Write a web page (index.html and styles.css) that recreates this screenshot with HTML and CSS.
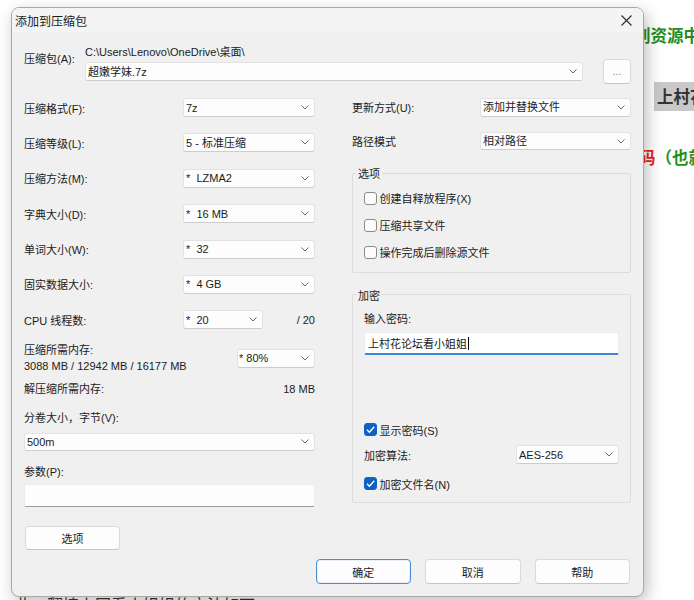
FILE: index.html
```html
<!DOCTYPE html>
<html lang="zh-CN">
<head>
<meta charset="utf-8">
<title>添加到压缩包</title>
<link rel="stylesheet" href="styles.css">
</head>
<body>
<div class="page">
  <div class="bg bg1">到资源中</div>
  <div class="bg bg2">上村花</div>
  <div class="bg bg3"><span class="red">码</span><span class="green">（也就</span></div>
  <div class="bg bg4">此、翻墙上网看小姐姐的方法如下</div>

  <div class="dialog">
    <div class="titlebar">
      <span class="title">添加到压缩包</span>
      <svg class="close" width="11" height="11" viewBox="0 0 11 11"><path d="M0.5 0.5 L10.5 10.5 M10.5 0.5 L0.5 10.5" stroke="#2b2b2b" stroke-width="1.1" fill="none"/></svg>
    </div>
    <div class="content">
      <div class="archive">
        <span class="lbl">压缩包(A):</span>
        <div class="archive-main">
          <div class="path">C:\Users\Lenovo\OneDrive\桌面\</div>
          <div class="combo arch-combo"><span class="val">超嫩学妹.7z</span><svg class="chev" width="8" height="5" viewBox="0 0 8 5"><path d="M0.5 0.5 L4 4 L7.5 0.5" stroke="#6a6a6a" fill="none"/></svg></div>
        </div>
        <div class="btn browse">...</div>
      </div>

      <div class="cols">
        <div class="left">
          <div class="row"><span class="lbl">压缩格式(F):</span><div class="combo"><span class="val">7z</span><svg class="chev" width="8" height="5" viewBox="0 0 8 5"><path d="M0.5 0.5 L4 4 L7.5 0.5" stroke="#6a6a6a" fill="none"/></svg></div></div>
          <div class="row"><span class="lbl">压缩等级(L):</span><div class="combo"><span class="val">5 - 标准压缩</span><svg class="chev" width="8" height="5" viewBox="0 0 8 5"><path d="M0.5 0.5 L4 4 L7.5 0.5" stroke="#6a6a6a" fill="none"/></svg></div></div>
          <div class="row"><span class="lbl">压缩方法(M):</span><div class="combo"><span class="val">*  LZMA2</span><svg class="chev" width="8" height="5" viewBox="0 0 8 5"><path d="M0.5 0.5 L4 4 L7.5 0.5" stroke="#6a6a6a" fill="none"/></svg></div></div>
          <div class="row"><span class="lbl">字典大小(D):</span><div class="combo"><span class="val">*  16 MB</span><svg class="chev" width="8" height="5" viewBox="0 0 8 5"><path d="M0.5 0.5 L4 4 L7.5 0.5" stroke="#6a6a6a" fill="none"/></svg></div></div>
          <div class="row"><span class="lbl">单词大小(W):</span><div class="combo"><span class="val">*  32</span><svg class="chev" width="8" height="5" viewBox="0 0 8 5"><path d="M0.5 0.5 L4 4 L7.5 0.5" stroke="#6a6a6a" fill="none"/></svg></div></div>
          <div class="row"><span class="lbl">固实数据大小:</span><div class="combo"><span class="val">*  4 GB</span><svg class="chev" width="8" height="5" viewBox="0 0 8 5"><path d="M0.5 0.5 L4 4 L7.5 0.5" stroke="#6a6a6a" fill="none"/></svg></div></div>
          <div class="row"><span class="lbl">CPU 线程数:</span><div class="combo cpu"><span class="val">*  20</span><svg class="chev" width="8" height="5" viewBox="0 0 8 5"><path d="M0.5 0.5 L4 4 L7.5 0.5" stroke="#6a6a6a" fill="none"/></svg></div><span class="total">/ 20</span></div>

          <div class="mem">
            <div class="mem-text">
              <div>压缩所需内存:</div>
              <div>3088 MB / 12942 MB / 16177 MB</div>
            </div>
            <div class="combo mem-combo"><span class="val">* 80%</span><svg class="chev" width="8" height="5" viewBox="0 0 8 5"><path d="M0.5 0.5 L4 4 L7.5 0.5" stroke="#6a6a6a" fill="none"/></svg></div>
          </div>
          <div class="decomp"><span>解压缩所需内存:</span><span>18 MB</span></div>
          <div class="plain-lbl vol-lbl">分卷大小，字节(V):</div>
          <div class="combo vol-combo"><span class="val">500m</span><svg class="chev" width="8" height="5" viewBox="0 0 8 5"><path d="M0.5 0.5 L4 4 L7.5 0.5" stroke="#6a6a6a" fill="none"/></svg></div>
          <div class="plain-lbl param-lbl">参数(P):</div>
          <div class="textbox param-box"></div>
          <div class="btn opt-btn">选项</div>
        </div>

        <div class="right">
          <div class="rrow"><span class="lbl">更新方式(U):</span><div class="combo"><span class="val">添加并替换文件</span><svg class="chev" width="8" height="5" viewBox="0 0 8 5"><path d="M0.5 0.5 L4 4 L7.5 0.5" stroke="#6a6a6a" fill="none"/></svg></div></div>
          <div class="rrow"><span class="lbl">路径模式</span><div class="combo"><span class="val">相对路径</span><svg class="chev" width="8" height="5" viewBox="0 0 8 5"><path d="M0.5 0.5 L4 4 L7.5 0.5" stroke="#6a6a6a" fill="none"/></svg></div></div>

          <fieldset class="group opts">
            <legend>选项</legend>
            <div class="cb"><span class="box"></span><span>创建自释放程序(X)</span></div>
            <div class="cb"><span class="box"></span><span>压缩共享文件</span></div>
            <div class="cb"><span class="box"></span><span>操作完成后删除源文件</span></div>
          </fieldset>

          <fieldset class="group enc">
            <legend>加密</legend>
            <div class="pw-lbl">输入密码:</div>
            <div class="pw-box"><span class="pw-text">上村花论坛看小姐姐</span><span class="caret"></span></div>
            <div class="cb show-pw"><span class="box checked"><svg width="13" height="13" viewBox="0 0 13 13"><path d="M3 6.8 L5.4 9.2 L10.2 3.8" stroke="#fff" stroke-width="1.4" fill="none"/></svg></span><span>显示密码(S)</span></div>
            <div class="alg"><span class="lbl">加密算法:</span><div class="combo"><span class="val">AES-256</span><svg class="chev" width="8" height="5" viewBox="0 0 8 5"><path d="M0.5 0.5 L4 4 L7.5 0.5" stroke="#6a6a6a" fill="none"/></svg></div></div>
            <div class="cb enc-names"><span class="box checked"><svg width="13" height="13" viewBox="0 0 13 13"><path d="M3 6.8 L5.4 9.2 L10.2 3.8" stroke="#fff" stroke-width="1.4" fill="none"/></svg></span><span>加密文件名(N)</span></div>
          </fieldset>
        </div>
      </div>

      <div class="buttons">
        <div class="btn default">确定</div>
        <div class="btn">取消</div>
        <div class="btn">帮助</div>
      </div>
    </div>
  </div>
</div>
</body>
</html>
```

FILE: styles.css
```css
* { box-sizing: border-box; }
html, body { margin: 0; padding: 0; }
body {
  width: 694px;
  height: 600px;
  overflow: hidden;
  background: #ffffff;
  font-family: "Liberation Sans", "Noto Sans CJK SC", sans-serif;
  font-size: 11px;
  color: #1b1b1b;
}
.page { position: relative; width: 694px; height: 600px; overflow: hidden; }

/* background page fragments behind the window */
.bg {
  position: absolute;
  font-family: "Noto Sans CJK SC", sans-serif;
  font-weight: bold;
  font-size: 16.5px;
  line-height: 22px;
  white-space: nowrap;
}
.bg1 { left: 634px; top: 24px; color: #1f8f1f; }
.bg2 { left: 654px; top: 82px; width: 60px; height: 29px; padding: 3px 0 0 3px; background: #c9c9c9; color: #333; }
.bg3 { left: 639px; top: 146px; }
.red { color: #e52323; }
.green { color: #1f8f1f; }
.bg4 { left: 15px; top: 593px; color: #333; font-weight: normal; font-size: 16px; }

/* window */
.dialog {
  position: absolute;
  left: 11px;
  top: 7px;
  width: 633px;
  height: 590px;
  background: #f0f0f0;
  border: 1px solid #a9a9a9;
  border-radius: 8px;
  box-shadow: 3px 5px 16px rgba(0, 0, 0, 0.26);
  overflow: hidden;
  display: flex;
  flex-direction: column;
}
.titlebar {
  flex: none;
  height: 24px;
  display: flex;
  align-items: center;
  justify-content: space-between;
  padding: 0 11px 0 3px;
  background: #f4f4f5;
  font-family: "Noto Sans CJK SC", sans-serif;
  font-size: 12px;
}
.close { display: block; }
.content {
  flex: 1;
  display: flex;
  flex-direction: column;
  padding: 13px 12px 0 12px;
}

/* common controls */
.combo {
  display: flex;
  align-items: center;
  background: #fdfdfd;
  border: 1px solid #e2e2e2;
  border-bottom-color: #cdcdcd;
  border-radius: 3px;
  padding-left: 2px;
  line-height: 16px;
  white-space: pre;
}
.combo .val { flex: 1; overflow: hidden; }
.chev { flex: none; margin-right: 5px; display: block; }
.btn {
  display: flex;
  align-items: center;
  justify-content: center;
  background: #fdfdfd;
  border: 1px solid #dadada;
  border-bottom-color: #c6c6c6;
  border-radius: 4px;
  font-family: "Noto Sans CJK SC", sans-serif;
}
.box {
  flex: none;
  width: 13px;
  height: 13px;
  border: 1px solid #8b8b8b;
  border-radius: 3px;
  background: #fbfbfb;
}
.box.checked { background: #0f62c2; border-color: #0f62c2; }
.box svg { display: block; margin: -1px; }

/* archive row */
.archive { display: flex; align-items: flex-start; }
.archive .lbl { width: 61px; margin-top: 6px; line-height: 16px; }
.archive-main { flex: 1; }
.path { line-height: 14px; }
.arch-combo { margin-top: 3px; height: 19px; }
.browse { flex: none; width: 28px; height: 25px; margin-left: 20px; margin-top: 14px; color: #888; font-size: 10px; padding-bottom: 3px; }

/* columns */
.cols { display: flex; gap: 37px; margin-top: 14px; }
.left { width: 291px; display: flex; flex-direction: column; }
.right { width: 279px; display: flex; flex-direction: column; }

.row { display: flex; align-items: center; height: 19px; }
.row + .row { margin-top: 16.4px; }
.row .lbl { width: 159px; flex: none; }
.row .combo { flex: 1; height: 19px; }
.row .combo.cpu { flex: none; width: 80px; }
.total { flex: 1; text-align: right; }

.mem { display: flex; margin-top: 12.6px; line-height: 16px; }
.mem-text { flex: 1; }
.mem-combo { flex: none; width: 78px; height: 18.4px; margin-top: 7.3px; padding-left: 1px; }
.decomp { display: flex; justify-content: space-between; margin-top: 7.3px; line-height: 16px; }
.plain-lbl { line-height: 16px; }
.vol-lbl { margin-top: 13px; }
.vol-combo { margin-top: 6.4px; height: 18px; }
.param-lbl { margin-top: 13px; }
.textbox {
  background: #fdfdfd;
  border: 1px solid #ececec;
  border-bottom: 1px solid #9a9a9a;
  border-radius: 2px;
}
.param-box { margin-top: 4.6px; height: 22.4px; }
.opt-btn { margin-top: 19px; margin-left: 1px; width: 95.2px; height: 24.6px; }

/* right column */
.rrow { display: flex; align-items: center; height: 18.5px; }
.rrow + .rrow { margin-top: 15.4px; }
.rrow .lbl { width: 128px; flex: none; }
.rrow .combo { flex: 1; height: 18.5px; }

.group {
  margin: 0;
  min-width: 0;
  border: 1px solid #dcdcdc;
  border-radius: 2px;
  padding: 9px 11px 12px 11px;
}
.group legend {
  padding: 0 2px;
  margin-left: -8px;
  line-height: 16px;
  font-family: "Noto Sans CJK SC", sans-serif;
}
.opts { margin-top: 15px; }
.cb { display: flex; align-items: center; gap: 2.6px; height: 16px; }
.opts .cb + .cb { margin-top: 11px; }

.enc { margin-top: 13.6px; padding: 8.3px 11px 10px 11px; }
.pw-lbl { line-height: 16px; }
.pw-box {
  margin-top: 5px;
  height: 23px;
  display: flex;
  align-items: center;
  padding-left: 3px;
  background: #ffffff;
  border: 1px solid #ececec;
  border-bottom: 2px solid #3f86d4;
  border-radius: 2px;
  font-family: "Noto Sans CJK SC", sans-serif;
  font-size: 11px;
}
.caret { display: inline-block; width: 1px; height: 13px; background: #000; margin-left: 1px; }
.show-pw { margin-top: 66.7px; }
.alg { display: flex; align-items: center; height: 18.7px; margin-top: 7.3px; }
.alg .lbl { width: 152px; flex: none; }
.alg .combo { flex: 1; height: 18.7px; }
.enc-names { margin-top: 12px; }

/* bottom buttons */
.buttons { display: flex; justify-content: flex-end; gap: 14px; margin-top: 9px; padding-right: 1px; }
.buttons .btn { width: 95.5px; height: 25px; }
.buttons .btn.default { border: 1px solid #4a8ed8; box-shadow: inset 0 0 0 1px #e8f1fb; }
```
